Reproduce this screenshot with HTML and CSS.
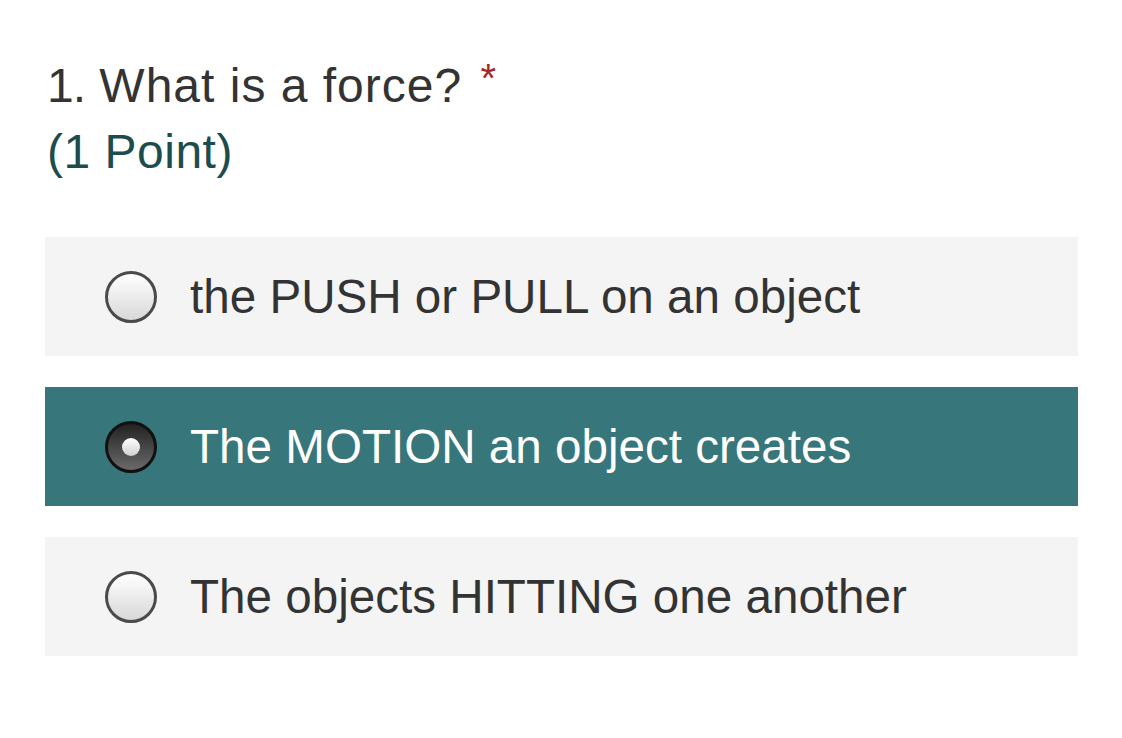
FILE: index.html
```html
<!DOCTYPE html>
<html>
<head>
<meta charset="utf-8">
<link rel="stylesheet" href="styles.css">
</head>
<body>
<div class="question">
  <div class="title">
    <div class="q-line"><span class="num">1.</span> What is a force? <span class="req">*</span></div>
    <div class="points">(1 Point)</div>
  </div>
  <div class="options">
    <label class="option">
      <span class="radio"></span>
      <span class="text">the PUSH or PULL on an object</span>
    </label>
    <label class="option selected">
      <span class="radio"><span class="dot"></span></span>
      <span class="text">The MOTION an object creates</span>
    </label>
    <label class="option">
      <span class="radio"></span>
      <span class="text">The objects HITTING one another</span>
    </label>
  </div>
</div>
</body>
</html>
```
FILE: styles.css
```css
html, body {
  margin: 0;
  padding: 0;
  background: #ffffff;
}
body {
  font-family: "Liberation Sans", Arial, sans-serif;
}
.question {
  padding: 45px 44px 0 45px;
}
.title {
  padding-left: 2px;
  margin-bottom: 52px;
}
.q-line {
  font-size: 48px;
  letter-spacing: 1px;
  line-height: 66px;
  color: #333333;
}
.num {
  letter-spacing: -1px;
}
.req {
  color: #a4262c;
  font-size: 40px;
  vertical-align: 10px;
  margin-left: 4px;
}
.points {
  font-size: 48px;
  letter-spacing: 0.5px;
  line-height: 66px;
  color: #1d4c4e;
}
.options {
  display: flex;
  flex-direction: column;
  gap: 31px;
}
.option {
  display: flex;
  align-items: center;
  height: 119px;
  background: #f4f4f4;
  padding-left: 60px;
  box-sizing: border-box;
}
.option.selected {
  background: #37777b;
}
.radio {
  width: 46px;
  height: 46px;
  border-radius: 50%;
  border: 3px solid #4a4a4a;
  background: linear-gradient(#ffffff, #d8d8d8);
  display: flex;
  align-items: center;
  justify-content: center;
  flex: none;
}
.selected .radio {
  border-color: #111111;
  background: linear-gradient(#222222, #6a6a6a);
}
.dot {
  width: 18px;
  height: 18px;
  border-radius: 50%;
  background: linear-gradient(#ffffff, #d0d0d0);
}
.text {
  margin-left: 33px;
  font-size: 47.6px;
  color: #333333;
}
.selected .text {
  color: #ffffff;
}
```
